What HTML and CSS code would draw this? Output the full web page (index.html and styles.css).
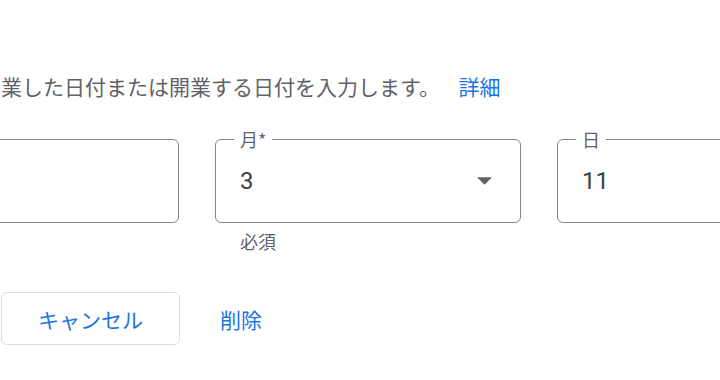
FILE: index.html
```html
<!DOCTYPE html>
<html lang="ja">
<head>
<meta charset="utf-8">
<link rel="stylesheet" href="styles.css">
</head>
<body>
<div class="page">
  <p class="desc">業した日付または開業する日付を入力します。 <a class="link" href="#">詳細</a></p>
  <div class="fields">
    <div class="field-wrap">
      <div class="field"><span class="value"></span></div>
    </div>
    <div class="field-wrap">
      <div class="field">
        <span class="label">月*</span>
        <span class="value">3</span>
        <svg class="arrow" width="15" height="8" viewBox="0 0 10 5"><path d="M0 0h10L5 5z" fill="#5f6368"/></svg>
      </div>
      <div class="helper">必須</div>
    </div>
    <div class="field-wrap">
      <div class="field"><span class="label">日</span><span class="value">11</span></div>
    </div>
  </div>
  <div class="actions">
    <button class="btn btn-outline">キャンセル</button>
    <button class="btn btn-text">削除</button>
  </div>
</div>
</body>
</html>
```
FILE: styles.css
```css
html, body {
  margin: 0;
  padding: 0;
  background: #fff;
  overflow: hidden;
}
body {
  width: 720px;
  height: 380px;
  font-family: Roboto, "Noto Sans CJK JP", sans-serif;
}
.page {
  padding-top: 71px;
}
.desc {
  margin: 0 0 0 1px;
  font-size: 21px;
  line-height: 30px;
  color: #5f6368;
  white-space: nowrap;
  font-family: "Noto Sans CJK JP", sans-serif;
}
.link {
  color: #1a73e8;
  text-decoration: none;
  margin-left: 14px;
}
.fields {
  display: flex;
  gap: 36px;
  margin-left: -127px;
  margin-top: 38px;
  height: 124px;
}
.field-wrap {
  width: 306px;
  flex: none;
}
.field {
  position: relative;
  box-sizing: border-box;
  height: 84px;
  border: 1.5px solid #80868b;
  border-radius: 6px;
  display: flex;
  align-items: center;
  padding: 0 24px;
}
.label {
  position: absolute;
  top: -13px;
  left: 18px;
  padding: 0 6px;
  background: #fff;
  font-size: 18px;
  line-height: 24px;
  color: #5f6368;
  font-family: "Noto Sans CJK JP", sans-serif;
}
.value {
  flex: 1;
  font-size: 24px;
  color: #3c4043;
  font-family: Roboto, sans-serif;
}
.arrow {
  margin-right: 4px;
}
.helper {
  margin-top: 6px;
  padding-left: 25px;
  font-size: 18px;
  line-height: 24px;
  color: #5f6368;
  font-family: "Noto Sans CJK JP", sans-serif;
}
.actions {
  display: flex;
  align-items: center;
  gap: 22px;
  margin-left: 1px;
  margin-top: 29px;
}
.btn {
  font-family: "Noto Sans CJK JP", sans-serif;
  font-size: 21px;
  color: #1a73e8;
  background: #fff;
  cursor: pointer;
}
.btn-outline {
  box-sizing: border-box;
  width: 179px;
  height: 53px;
  border: 1.5px solid #dadce0;
  border-radius: 6px;
}
.btn-text {
  border: none;
  padding: 0 18px;
  height: 53px;
}
```
